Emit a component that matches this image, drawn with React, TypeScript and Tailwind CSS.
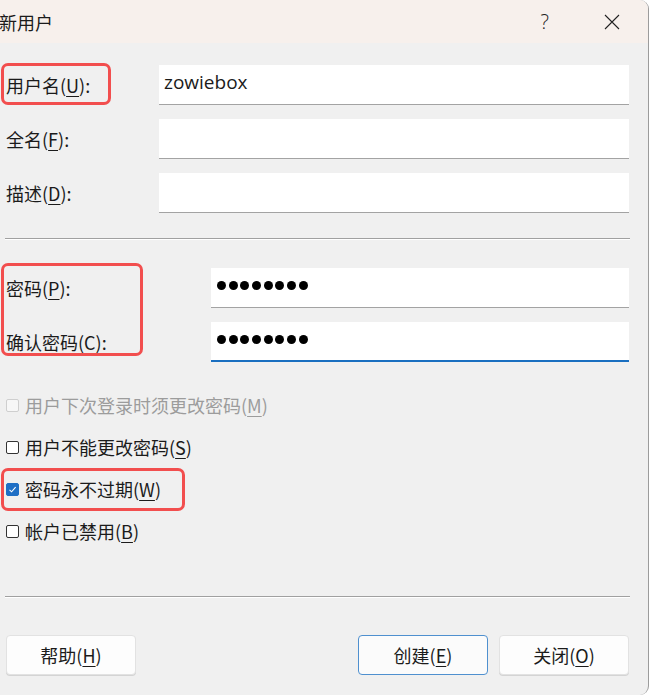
import React from "react";

const FONT = { fontFamily: '"Noto Sans CJK SC", "Noto Sans", sans-serif' };

function Mn({ text, k }: { text: string; k: string }) {
  // label with underlined mnemonic letter, e.g. 用户名(U):
  const i = text.indexOf("(" + k + ")");
  if (i < 0) return <>{text}</>;
  return (
    <>
      {text.slice(0, i)}(<span className="underline underline-offset-[3px] decoration-1">{k}</span>){text.slice(i + 3)}
    </>
  );
}

function Field({ label, k, left, children, focused }: { label: string; k: string; left: number; children?: React.ReactNode; focused?: boolean }) {
  return (
    <div className="flex items-center h-[40px]">
      <div className="pl-[6px] shrink-0" style={{ width: left }}>
        <Mn text={label} k={k} />
      </div>
      <div
        className={
          "flex-1 h-full bg-white flex items-center pl-[5px] pb-[4px] border-b " +
          (focused ? "border-[#1a6fc0] border-b-2" : "border-[#a3a3a3]")
        }
      >
        {children}
      </div>
    </div>
  );
}

function Dots() {
  return (
    <div className="flex gap-[2.7px] pl-[1px]">
      {Array.from({ length: 8 }).map((_, i) => (
        <span key={i} className="w-[9px] h-[9px] rounded-full bg-black" />
      ))}
    </div>
  );
}

function Check({ label, k, checked, disabled }: { label: string; k: string; checked?: boolean; disabled?: boolean }) {
  return (
    <div className={"flex items-center h-[42px] pl-[6px] " + (disabled ? "text-[#9c9c9c]" : "")}>
      <span
        className={
          "w-[13px] h-[13px] rounded-[2px] border flex items-center justify-center mr-[6px] " +
          (checked
            ? "bg-[#1f6fc5] border-[#1f6fc5]"
            : disabled
            ? "bg-[#f7f7f7] border-[#cfcfcf]"
            : "bg-white border-[#333]")
        }
      >
        {checked && (
          <svg width="9" height="9" viewBox="0 0 9 9">
            <path d="M1.5 4.8 L3.6 6.8 L7.6 2.2" fill="none" stroke="white" strokeWidth="1.1" />
          </svg>
        )}
      </span>
      <span>
        <Mn text={label} k={k} />
      </span>
    </div>
  );
}

function Btn({ label, k, primary }: { label: string; k: string; primary?: boolean }) {
  return (
    <button
      type="button"
      className={
        "w-[130px] h-[40px] rounded-[4px] flex items-center justify-center border " +
        (primary ? "bg-[#fbfbfb] border-[#4f90cf]" : "bg-[#fdfdfd] border-[#e2e2e2] shadow-[0_1px_0_#d4d4d4]")
      }
    >
      <Mn text={label} k={k} />
    </button>
  );
}

function Sep() {
  return (
    <div className="ml-[5px] w-[625px]">
      <div className="h-px bg-[#a0a0a0]" />
      <div className="h-px bg-white" />
    </div>
  );
}

export default function App() {
  return (
    <div className="w-[651px] h-[695px] bg-white" style={FONT}>
      <div className="relative w-[649px] h-[695px] bg-[#f0f0f0] border-r border-[#9c9c9c] rounded-tr-[9px] rounded-br-[9px] overflow-hidden text-[18px] text-[#1b1b1b] leading-none">
        {/* title bar */}
        <div className="h-[43px] bg-[#f7f0ec] flex items-center">
          <span className="-ml-[1px]">新用户</span>
          <span className="ml-auto mr-[55px] text-[20px] font-light text-[#222]" style={{ fontFamily: '"Open Sans", sans-serif' }}>?</span>
          <svg width="16" height="16" viewBox="0 0 16 16" className="mr-[28px]">
            <path d="M1 1 L15 15 M15 1 L1 15" stroke="#222" strokeWidth="1.1" />
          </svg>
        </div>

        <div className="pr-[19px]">
          <div className="mt-[22px] flex flex-col gap-[14px]">
            <Field label="用户名(U):" k="U" left={159}>
              <span className="text-[19px]" style={{ fontFamily: '"Open Sans", "Noto Sans", sans-serif' }}>zowiebox</span>
            </Field>
            <Field label="全名(F):" k="F" left={159} />
            <Field label="描述(D):" k="D" left={159} />
          </div>
        </div>

        <div className="mt-[25px]">
          <Sep />
        </div>

        <div className="pr-[19px]">
          <div className="mt-[28px] flex flex-col gap-[14px]">
            <Field label="密码(P):" k="P" left={211}>
              <Dots />
            </Field>
            <Field label="确认密码(C):" k="C" left={211} focused>
              <Dots />
            </Field>
          </div>
        </div>

        <div className="mt-[22px]">
          <Check label="用户下次登录时须更改密码(M)" k="M" disabled />
          <Check label="用户不能更改密码(S)" k="S" />
          <Check label="密码永不过期(W)" k="W" checked />
          <Check label="帐户已禁用(B)" k="B" />
        </div>

        <div className="mt-[44px]">
          <Sep />
        </div>

        <div className="mt-[37px] flex pl-[6px] pr-[19px]">
          <Btn label="帮助(H)" k="H" />
          <div className="ml-auto flex gap-[11px]">
            <Btn label="创建(E)" k="E" primary />
            <Btn label="关闭(O)" k="O" />
          </div>
        </div>

        {/* red annotation boxes */}
        <div className="absolute left-[1px] top-[63px] w-[110px] h-[42px] border-[3px] border-[#f24e4e] rounded-[7px]" />
        <div className="absolute left-[1px] top-[263px] w-[142px] h-[93px] border-[3px] border-[#f24e4e] rounded-[7px]" />
        <div className="absolute left-[1px] top-[468px] w-[184px] h-[43px] border-[3px] border-[#f24e4e] rounded-[7px]" />
      </div>
    </div>
  );
}
